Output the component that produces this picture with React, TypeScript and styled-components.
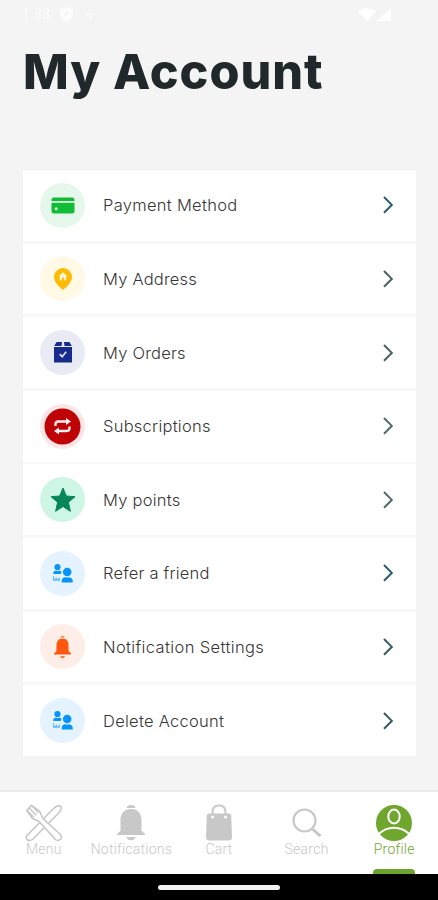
import React from "react";
import styled, { createGlobalStyle } from "styled-components";

const GlobalStyle = createGlobalStyle`
  * { box-sizing: border-box; }
  body { margin: 0; background: #f4f4f4; }
`;

const Screen = styled.div`
  width: 438px;
  height: 900px;
  display: flex;
  flex-direction: column;
  overflow: hidden;
  background: #f4f4f4;
  font-family: Inter, sans-serif;
`;

const StatusBar = styled.header`
  height: 28px;
  flex: none;
  display: flex;
  align-items: center;
  justify-content: space-between;
  padding: 0 47px 0 22px;
  color: #fcfcfc;
`;

const StatusGroup = styled.div<{ $gap: number }>`
  display: flex;
  align-items: center;
  gap: ${(p) => p.$gap}px;
`;

const Clock = styled.span`
  width: 29px;
  font: 400 14px/16px Roboto, sans-serif;
  letter-spacing: 0.4px;
`;

const Title = styled.h1`
  flex: none;
  height: 141px;
  margin: 0;
  padding: 15px 0 0 23px;
  color: #20282c;
  font-size: 48.5px;
  line-height: 58px;
  font-weight: 800;
  letter-spacing: 1px;
  white-space: nowrap;
`;

const List = styled.main`
  flex: none;
  width: 393px;
  height: 587px;
  margin-left: 23px;
  display: grid;
  grid-template-rows: repeat(8, 1fr);
  row-gap: 2.8px;
  border-top: 1px solid #ececec;
  background: #f7f7f7;
`;

const Row = styled.div`
  display: flex;
  align-items: center;
  padding: 0 21.500px 0 17px;
  background: #fff;
`;

const Badge = styled.div<{ $tint: string }>`
  width: 45px;
  height: 45px;
  flex: none;
  display: grid;
  place-items: center;
  border-radius: 50%;
  background: ${(p) => p.$tint};
`;

const RowLabel = styled.span<{ $spacing: number }>`
  flex: 1;
  padding: 0 0 0 18px;
  color: #363636;
  font-size: 16.5px;
  line-height: 22px;
  font-weight: 350;
  letter-spacing: ${(p) => p.$spacing}px;
  white-space: nowrap;
`;

const NavBar = styled.nav`
  flex: none;
  height: 84px;
  margin-top: auto;
  display: grid;
  grid-template-columns: repeat(5, 1fr);
  border-top: 2px solid #ebebeb;
  background: #fff;
`;

const NavItem = styled.div<{ $active?: boolean }>`
  display: flex;
  flex-direction: column;
  align-items: center;
  padding-top: 12px;
  color: ${(p) => (p.$active ? "#6fa62d" : "#c8c8c8")};
`;

const NavLabel = styled.span`
  margin-top: -1px;
  font: 350 14px/17px Roboto, sans-serif;
  letter-spacing: 0.25px;
`;

const ActiveMark = styled.span`
  width: 42px;
  height: 5px;
  margin-top: auto;
  border-radius: 4px 4px 0 0;
  background: #6ca32c;
`;

const GestureBar = styled.footer`
  flex: none;
  height: 26px;
  display: flex;
  justify-content: center;
  padding-top: 10.5px;
  background: #000;
`;

const GestureHandle = styled.div`
  width: 122px;
  height: 5px;
  border-radius: 3px;
  background: #f2f2f2;
`;

const CardIcon = () => (
  <svg width="24" height="17" viewBox="0 0 24 17">
    <path d="M3 .5h18a2.500 2.500 0 0 1 2.500 2.500V4H.5V3A2.500 2.500 0 0 1 3 .5ZM.5 5.800h23v8.200a2.500 2.500 0 0 1-2.500 2.500H3A2.500 2.500 0 0 1 .5 14Z" fill="#12bd36" />
    <circle cx="5.200" cy="11.800" r="1.500" fill="#d5f5db" />
  </svg>
);

const PinIcon = () => (
  <svg width="20" height="24" viewBox="0 0 20 24">
    <path d="M10 1a9 9 0 0 1 9 9c0 5.300-5.500 10-9 13C6.500 20 1 15.300 1 10a9 9 0 0 1 9-9Z" fill="#fdbb05" />
    <path d="m10 5.200 4 3.900-.8.500v3.600h-2v-2.500H8.800v2.500h-2V9.600L6 9.100Z" fill="#fff8df" />
  </svg>
);

const BoxIcon = () => (
  <svg width="20" height="23" viewBox="0 0 20 23">
    <path d="M3.600 1H9l-.5 4H1.200ZM11 1h5.400l2.400 4h-7.300ZM1 6h18V21.500H1Z" fill="#182a8c" />
    <path d="m6.800 13.200 2.400 2.500 4-4.900" fill="none" stroke="#dfe4f6" strokeWidth="1.700" />
  </svg>
);

const RepeatIcon = () => (
  <svg width="37" height="37" viewBox="0 0 37 37">
    <circle cx="18.500" cy="18.500" r="18" fill="#bf0205" />
    <g stroke="#fff1f0" fill="none" strokeWidth="2.300">
      <path d="M11.500 18v-1.800q0-2.700 2.700-2.700H23M25.500 18.500v1.800q0 2.700-2.700 2.700H14" />
    </g>
    <path d="m22 10 5 3.500-5 3.600ZM15 19.400 10 23l5 3.500Z" fill="#fff1f0" />
  </svg>
);

const StarIcon = () => (
  <svg width="26" height="26" viewBox="0 0 26 26">
    <path d="m13 1 3.300 8 8.700.7-6.600 5.600 2 9L13 19.500l-7.400 4.800 2-9L1 9.700 9.700 9Z" fill="#078657" stroke="#078657" strokeLinejoin="round" />
  </svg>
);

const PeopleIcon = () => (
  <svg width="22" height="21" viewBox="0 0 22 21" fill="#0794fa">
    <circle cx="5.500" cy="4" r="3.100" />
    <path d="M1.300 11V9.800Q1.700 7.800 4 7.500l1.500.8L7 7.500q2 .3 2.500 1.500L8.700 11Z" />
    <circle cx="15.200" cy="9" r="4.300" />
    <path d="M9.700 19.500v-1.800q.5-3.200 3.500-3.500 2 .8 4 0 3.200.5 3.500 3.500v1.800Z" />
    <path d="M1 13.300 2 13v3h1.500v-1.500H5v1.700h1.500v-1.500H8v3H1Z" opacity=".6" />
  </svg>
);

const AlertIcon = () => (
  <svg width="19" height="24" viewBox="0 0 19 24" fill="#ff570d">
    <path d="M7.300 2.700q.3-2 2.200-2t2.200 2" opacity=".65" />
    <path d="M9.500 3.500c4 0 6 2.900 6 6.500v6l2.500 2.500v1H1v-1L3.500 16v-6c0-3.600 2-6.500 6-6.500ZM7 21.200h5q-.5 1.800-2.500 1.800T7 21.200Z" />
  </svg>
);

const Chevron = ({ color }: { color: string }) => (
  <svg width="14" height="20" viewBox="0 0 14 20">
    <path d="m3 2 7.800 7.900L3 17.700" fill="none" stroke={color} strokeWidth="2" />
  </svg>
);

const CutleryIcon = () => (
  <svg width="38" height="38" viewBox="0 0 38 38" fill="#fff" stroke="#c5c5c5" strokeWidth="1.500" strokeLinejoin="round">
    <path d="M2 31.500 28.500 4.500Q32 .8 35.500 2q2.200 3.300-2.300 7.500L8 35q-3 2.500-5.500 1Q0 34 2 31.500Z" />
    <path d="M14 17.500 30.500 35.500q2.500 2 5-.2 2-2.300-.4-5L18 14.500 14.500 7 6.500 1.300l-4.700 5 5.700 8.200Z" />
    <path d="m4 3.800 7 7.400M1.800 6.300l7 7M6.500 1.300l7 7.400" fill="none" />
  </svg>
);

const BellIcon = () => (
  <svg width="30" height="38" viewBox="0 0 30 38" fill="currentColor">
    <path d="M10.500 4q.5-3 4.500-3t4.500 3Z" />
    <path d="M15 5c7 0 10.500 4.700 10.500 10.500v11.200l3.500 3.300v1H1v-1l3.500-3.300V15.500C4.500 9.700 8 5 15 5ZM10.500 33h9q-1 3.200-4.500 3.200T10.500 33Z" />
  </svg>
);

const BagIcon = () => (
  <svg width="28" height="38" viewBox="0 0 28 38">
    <path d="M7.500 13V8.300q0-6.800 6.500-6.800t6.500 6.800V13" fill="none" stroke="currentColor" strokeWidth="2" />
    <path d="M4 9.500h20q2 0 2.200 2l.8 21.500q0 3.500-3.500 3.500h-19Q1 36.500 1 33l.8-21.500q.2-2 2.200-2Z" fill="currentColor" />
    <circle cx="7.500" cy="13" r="1.500" fill="#fff" />
    <circle cx="20.500" cy="13" r="1.500" fill="#fff" />
  </svg>
);

const SearchIcon = () => (
  <svg width="30" height="38" viewBox="0 0 30 38" fill="none" stroke="currentColor">
    <circle cx="12.500" cy="16.500" r="11" strokeWidth="2.200" />
    <path d="m20.500 25 8 7.200" strokeWidth="3" />
  </svg>
);

const ProfileIcon = () => (
  <svg width="38" height="38" viewBox="0 0 38 38">
    <circle cx="19" cy="19" r="18" fill="#6fa62d" />
    <g fill="none" stroke="#fff" strokeWidth="2">
      <ellipse cx="19" cy="12.500" rx="5.700" ry="7" />
      <path d="M3.700 30Q10 23.700 19 23.700T34.300 30" />
    </g>
  </svg>
);

const items = [
  { label: "Payment Method", tint: "#e6f8eb", Icon: CardIcon, spacing: 0.3, arrow: "#285b70" },
  { label: "My Address", tint: "#fff9e6", Icon: PinIcon, spacing: 0.22, arrow: "#466168" },
  { label: "My Orders", tint: "#e8eaf4", Icon: BoxIcon, spacing: 0.22, arrow: "#466168" },
  { label: "Subscriptions", tint: "#fce5e6", Icon: RepeatIcon, spacing: 0.25, arrow: "#526970" },
  { label: "My points", tint: "#cdf6e5", Icon: StarIcon, spacing: 0.25, arrow: "#526970" },
  { label: "Refer a friend", tint: "#e4f3ff", Icon: PeopleIcon, spacing: 0.2, arrow: "#285b70" },
  { label: "Notification Settings", tint: "#ffeee8", Icon: AlertIcon, spacing: 0.37, arrow: "#345b65" },
  { label: "Delete Account", tint: "#e4f3ff", Icon: PeopleIcon, spacing: 0.27, arrow: "#345b65" },
];

const tabs = [
  { label: "Menu", Icon: CutleryIcon },
  { label: "Notifications", Icon: BellIcon },
  { label: "Cart", Icon: BagIcon },
  { label: "Search", Icon: SearchIcon },
  { label: "Profile", Icon: ProfileIcon, active: true },
];

export default function App() {
  return (
    <>
      <GlobalStyle />
      <Screen>
        <StatusBar>
          <StatusGroup $gap={9}>
            <Clock>1:33</Clock>
            <svg width="13" height="15" viewBox="0 0 13 15">
              <path d="M6.500 0 13 2.500V7q0 5-6.500 8Q0 12 0 7V2.500Z" fill="currentColor" />
              <circle cx="6.500" cy="6.500" r="1.800" fill="#f4f4f4" />
            </svg>
            <svg width="16" height="14" viewBox="0 0 16 14" opacity=".7">
              <path d="m9 2-4 5h6l-3 5" stroke="currentColor" fill="none" strokeWidth="2" />
            </svg>
          </StatusGroup>
          <StatusGroup $gap={1}>
            <svg width="18" height="13" viewBox="0 0 18 13"><path d="M0 3q9-6 18 0L9 13Z" fill="#fff" /></svg>
            <svg width="14" height="13" viewBox="0 0 14 13"><path d="M14 0v13H0Z" fill="#fff" /></svg>
          </StatusGroup>
        </StatusBar>
        <Title>My Account</Title>
        <List>
          {items.map(({ label, tint, Icon, spacing, arrow }) => (
            <Row key={label}>
              <Badge $tint={tint}><Icon /></Badge>
              <RowLabel $spacing={spacing}>{label}</RowLabel>
              <Chevron color={arrow} />
            </Row>
          ))}
        </List>
        <NavBar>
          {tabs.map(({ label, Icon, active }) => (
            <NavItem key={label} $active={active}>
              <Icon />
              <NavLabel>{label}</NavLabel>
              {active && <ActiveMark />}
            </NavItem>
          ))}
        </NavBar>
        <GestureBar><GestureHandle /></GestureBar>
      </Screen>
    </>
  );
}
